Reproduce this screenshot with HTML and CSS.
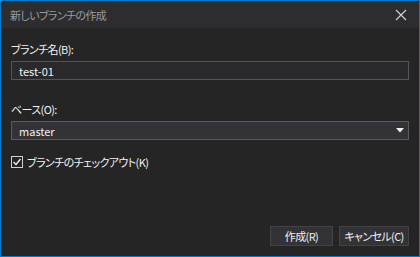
FILE: index.html
```html
<!DOCTYPE html>
<html lang="ja">
  <head>
    <meta charset="UTF-8" />
    <meta name="viewport" content="width=device-width, initial-scale=1.0" />
    <title>新しいブランチの作成</title>
    <link rel="stylesheet" href="styles.css">
  </head>
  <body>
    <div class="dialog">
      <div class="titlebar">
        <span class="title">新しいブランチの作成</span>
        <svg class="close" width="12" height="12" viewBox="0 0 12 12">
          <path d="M1 1 L11 11 M11 1 L1 11" stroke="#d0d0d0" stroke-width="1.2" />
        </svg>
      </div>

      <div class="content">
        <label class="field-label">ブランチ名(B):</label>
        <div class="text-input">test-01</div>

        <label class="field-label base-label">ベース(O):</label>
        <div class="select">
          <span>master</span>
          <svg width="8" height="5" viewBox="0 0 8 5">
            <path d="M0 0 H8 L4 4.5 Z" fill="#f1f1f1" />
          </svg>
        </div>

        <div class="checkbox-row">
          <svg class="checkbox" width="12" height="12" viewBox="0 0 12 12">
            <rect x="0.5" y="0.5" width="11" height="11" fill="#252526" stroke="#d0d0d0" />
            <path d="M2.5 6 L5 8.5 L9.5 3" fill="none" stroke="#f1f1f1" stroke-width="1.3" />
          </svg>
          <span>ブランチのチェックアウト(K)</span>
        </div>

        <div class="buttons">
          <button class="btn btn-create">作成(R)</button>
          <button class="btn btn-cancel">キャンセル(C)</button>
        </div>
      </div>
    </div>
  </body>
</html>
```

FILE: styles.css
```css
:root {
  --accent: #007acc;
  --title-bg: #2d2d30;
  --body-bg: #252526;
  --field-bg: #333337;
  --field-border: #5a5a5e;
  --text: #f1f1f1;
}

html,
body {
  margin: 0;
  padding: 0;
  background-color: var(--body-bg);
}

body {
  font-family: "Noto Sans CJK JP", "Noto Sans", sans-serif;
  font-size: 11px;
  font-feature-settings: "palt";
  letter-spacing: -0.6px;
  color: var(--text);
}

.dialog {
  width: 420px;
  height: 257px;
  box-sizing: border-box;
  border: 1px solid var(--accent);
  display: flex;
  flex-direction: column;
}

.titlebar {
  height: 27px;
  flex-shrink: 0;
  background-color: var(--title-bg);
  display: flex;
  align-items: center;
  justify-content: space-between;
  padding: 0 12px 0 9px;
}

.title {
  color: #9a9a9a;
}

.content {
  flex: 1;
  display: flex;
  flex-direction: column;
  padding: 13px 10px 10px 10px;
}

.field-label {
  line-height: 16px;
  margin-bottom: 4px;
}

.base-label {
  margin-top: 21px;
}

.text-input,
.select {
  height: 19px;
  box-sizing: border-box;
  border: 1px solid var(--field-border);
  padding: 0 7px;
  display: flex;
  align-items: center;
  line-height: 16px;
  letter-spacing: 0;
}

.text-input {
  background-color: #2a2a2c;
  border-color: #555558;
}

.select {
  background-color: var(--field-bg);
  justify-content: space-between;
  padding-right: 4px;
}

.checkbox-row {
  display: flex;
  align-items: center;
  gap: 4px;
  margin-top: 15px;
  line-height: 14px;
}

.checkbox {
  display: block;
}

.buttons {
  margin-top: auto;
  display: flex;
  justify-content: flex-end;
  gap: 6px;
}

.btn {
  font-family: inherit;
  font-size: 11px;
  font-feature-settings: "palt";
  letter-spacing: -0.6px;
  white-space: nowrap;
  color: var(--text);
  background-color: #333337;
  border: 1px solid #434346;
  height: 20px;
  padding: 0;
  line-height: 16px;
}

.btn-create {
  width: 63px;
}

.btn-cancel {
  width: 70px;
}
```
